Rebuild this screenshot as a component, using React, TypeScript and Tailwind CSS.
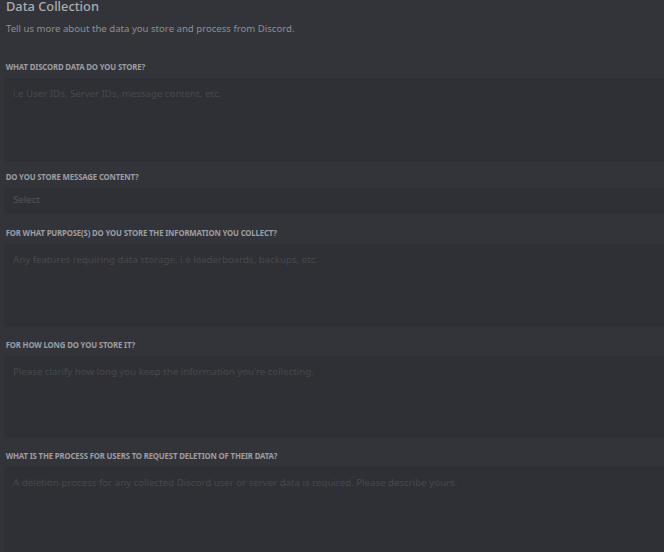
import React from "react";

const labelCls =
  "block w-max origin-left scale-x-[0.82] whitespace-nowrap text-[9.5px] leading-[12px] font-bold uppercase tracking-[-0.02em] text-[#9c9da2] pl-[2px]";
const areaCls =
  "w-full bg-[#2f3035] rounded-l-[3px] px-[9px] pt-[9px] text-[9.7px] leading-[14px] text-[#46484e]";

function Field({ label, placeholder, h, mt }: { label: string; placeholder: string; h: string; mt: string }) {
  return (
    <div className={mt}>
      <div className={labelCls}>{label}</div>
      <div className={`${areaCls} ${h} mt-[5px]`}>{placeholder}</div>
    </div>
  );
}

export default function App() {
  return (
    <div
      className="w-[664px] h-[552px] overflow-hidden bg-[#333439] pl-[4px]"
      style={{ fontFamily: "'Noto Sans', 'Open Sans', sans-serif" }}
    >
      <div className="text-[12.8px] leading-[13px] font-medium text-[#abacb1] pl-[2px] pt-0">
        Data Collection
      </div>
      <div className="text-[9.6px] leading-[14px] text-[#8c8e94] pl-[2px] mt-[9px]">
        Tell us more about the data you store and process from Discord.
      </div>
      <Field
        mt="mt-[25px]"
        label="What Discord data do you store?"
        placeholder="i.e User IDs, Server IDs, message content, etc."
        h="h-[84px]"
      />
      <div className="mt-[9px]">
        <div className={labelCls}>Do you store message content?</div>
        <div className="w-full h-[25px] bg-[#2f3035] rounded-l-[3px] px-[9px] mt-[5px] flex items-center text-[9.7px] text-[#52545a]">
          Select
        </div>
      </div>
      <Field
        mt="mt-[14px]"
        label="For what purpose(s) do you store the information you collect?"
        placeholder="Any features requiring data storage, i.e leaderboards, backups, etc."
        h="h-[83px]"
      />
      <Field
        mt="mt-[12px]"
        label="For how long do you store it?"
        placeholder="Please clarify how long you keep the information you're collecting."
        h="h-[81px]"
      />
      <Field
        mt="mt-[13px]"
        label="What is the process for users to request deletion of their data?"
        placeholder="A deletion process for any collected Discord user or server data is required. Please describe yours."
        h="h-[90px]"
      />
    </div>
  );
}
